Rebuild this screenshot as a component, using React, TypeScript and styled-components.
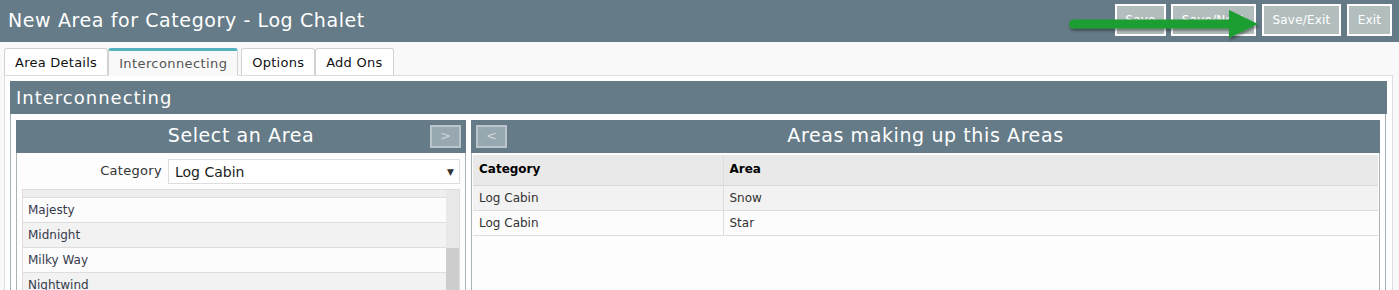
import React from "react";
import styled, { createGlobalStyle } from "styled-components";

const GlobalStyle = createGlobalStyle`
  html, body { margin: 0; padding: 0; }
  body {
    background: #f9f9f9;
    font-family: "DejaVu Sans", Verdana, sans-serif;
    overflow: hidden;
    width: 1399px;
    height: 290px;
  }
  * { box-sizing: border-box; }
`;

const slate = "#657b87";

const Page = styled.div`
  position: relative;
  width: 1399px;
  height: 290px;
  overflow: hidden;
`;

const TopBar = styled.header`
  height: 42px;
  background: ${slate};
  display: flex;
  align-items: center;
  justify-content: space-between;
  padding: 0 7px 0 8px;
`;

const Title = styled.h1`
  margin: 0 0 2px;
  font-weight: normal;
  font-size: 19px;
  letter-spacing: 0.6px;
  color: #fff;
`;

const ButtonGroup = styled.div`
  display: flex;
  gap: 6px;
  align-items: center;
  margin-top: -2px;
`;

const ActionButton = styled.button<{ $w: number }>`
  width: ${(p) => p.$w}px;
  height: 32px;
  background: #b2bebd;
  border: 2px solid #fff;
  color: #fff;
  font-family: "DejaVu Sans", Verdana, sans-serif;
  font-size: 12px;
  letter-spacing: 0.2px;
  padding: 0;
`;

const Arrow = styled.svg`
  position: absolute;
  left: 1064px;
  top: 6px;
  overflow: visible;
`;

const Main = styled.main`
  padding: 6px 6px 0 4px;
`;

const TabRow = styled.nav`
  display: flex;
  align-items: flex-end;
`;

const Tab = styled.div<{ $active?: boolean; $gap?: number }>`
  height: 28px;
  padding: 0 10px;
  margin-right: ${(p) => p.$gap ?? 0}px;
  margin-bottom: -1px;
  display: flex;
  align-items: center;
  font-size: 13px;
  letter-spacing: ${(p) => (p.$active ? "0.4px" : "0.25px")};
  border: 1px solid #d2d2d2;
  border-bottom: ${(p) => (p.$active ? "1px solid #f9f9f9" : "1px solid #ddd")};
  border-top: ${(p) => (p.$active ? "3px solid #55b3bd" : "1px solid #d2d2d2")};
  border-radius: 3px 3px 0 0;
  background: ${(p) => (p.$active ? "#f9f9f9" : "#fff")};
  color: ${(p) => (p.$active ? "#555" : "#111")};
  padding-top: ${(p) => (p.$active ? "1px" : "0")};
  position: relative;
  z-index: ${(p) => (p.$active ? 2 : 1)};
`;

const TabPanel = styled.section`
  border: 1px solid #ddd;
  background: #fff;
  padding: 5px;
  height: 240px;
`;

const SectionHeader = styled.div`
  height: 33px;
  background: ${slate};
  color: #fff;
  font-size: 18px;
  letter-spacing: 1px;
  display: flex;
  align-items: center;
  padding: 0 0 1px 6px;
`;

const SectionBody = styled.div`
  border: 1px solid #9fb0b8;
  border-top: none;
  padding: 6px 5px 0 5px;
  margin-right: 1px;
  display: flex;
  gap: 5px;
  height: 200px;
`;

const Panel = styled.div<{ $w?: number }>`
  ${(p) => (p.$w ? `width: ${p.$w}px; flex: none;` : "flex: 1;")}
  display: flex;
  flex-direction: column;
`;

const PanelHeader = styled.div`
  height: 33px;
  background: ${slate};
  display: grid;
  grid-template-columns: 1fr auto 1fr;
  align-items: center;
  padding: 0 5px;
`;

const PanelTitle = styled.div`
  grid-column: 2;
  color: #fff;
  font-size: 19px;
  letter-spacing: 0.6px;
  padding-bottom: 3px;
`;

const MoveButton = styled.div<{ $side: "left" | "right" }>`
  grid-column: ${(p) => (p.$side === "left" ? 1 : 3)};
  justify-self: ${(p) => (p.$side === "left" ? "start" : "end")};
  width: 31px;
  height: 23px;
  background: #97a8b0;
  border: 2px solid #b9c5ca;
  color: #d0d8dc;
  font-size: 13px;
  display: flex;
  align-items: center;
  justify-content: center;
  padding-bottom: 2px;
`;

const PanelBody = styled.div<{ $pad?: string }>`
  flex: 1;
  border: 1px solid #a9b3b8;
  border-top: none;
  padding: ${(p) => p.$pad ?? "0"};
  background: #fdfdfd;
`;

const FieldRow = styled.div`
  display: flex;
  align-items: center;
  gap: 6px;
  margin-bottom: 5px;
`;

const FieldLabel = styled.label`
  width: 140px;
  text-align: right;
  font-size: 13px;
  letter-spacing: 0.3px;
  color: #333;
  padding-bottom: 3px;
`;

const Select = styled.div`
  flex: 1;
  height: 25px;
  border: 1px solid #ddd;
  background: #fff;
  display: flex;
  align-items: center;
  justify-content: space-between;
  padding: 0 5px 0 6px;
  font-size: 14px;
  color: #222;
`;

const Caret = styled.span`
  font-size: 9px;
  color: #333;
`;

const ListBox = styled.div`
  border: 1px solid #ddd;
  display: flex;
  height: 110px;
`;

const ListRows = styled.div`
  flex: 1;
  display: flex;
  flex-direction: column;
`;

const ListHead = styled.div`
  height: 8px;
  background: #eee;
  border-bottom: 1px solid #ddd;
  flex: none;
`;

const ListRow = styled.div<{ $alt: boolean }>`
  height: 25px;
  flex: none;
  border-bottom: 1px solid #ddd;
  background: ${(p) => (p.$alt ? "#f2f2f2" : "#fcfcfc")};
  font-size: 12px;
  color: #363a4c;
  display: flex;
  align-items: center;
  padding: 0 5px;
`;

const ScrollTrack = styled.div`
  width: 13px;
  background: #e8e8e8;
  display: flex;
  flex-direction: column;
`;

const ScrollThumb = styled.div`
  margin-top: 58px;
  flex: 1;
  background: #cdcdcd;
`;

const Table = styled.table`
  width: calc(100% - 2px);
  margin: 2px 1px 0;
  border-collapse: collapse;
  font-size: 12px;
  color: #333;
`;

const Th = styled.th<{ $w?: number }>`
  ${(p) => (p.$w ? `width: ${p.$w}px;` : "")}
  height: 30px;
  background: #e9e9e9;
  border-bottom: 1px solid #d8d8d8;
  border-right: 1px solid #ddd;
  text-align: left;
  padding: 0 6px 1px;
  color: #000;
  font-weight: bold;
  &:last-child { border-right: none; }
`;

const Tr = styled.tr<{ $alt: boolean }>`
  background: ${(p) => (p.$alt ? "#f2f2f2" : "#fcfcfc")};
`;

const Td = styled.td`
  height: 25px;
  border-bottom: 1px solid #ddd;
  border-right: 1px solid #ddd;
  padding: 0 6px 0;
  &:last-child { border-right: none; }
`;

const areas = ["Majesty", "Midnight", "Milky Way", "Nightwind", "Ocean"];
const links = [
  { category: "Log Cabin", area: "Snow" },
  { category: "Log Cabin", area: "Star" },
];

export default function App() {
  return (
    <Page>
      <GlobalStyle />
      <TopBar>
        <Title>New Area for Category - Log Chalet</Title>
        <ButtonGroup>
          <ActionButton $w={51} style={{ marginRight: -1 }}>Save</ActionButton>
          <ActionButton $w={85}>Save/Next</ActionButton>
          <ActionButton $w={79}>Save/Exit</ActionButton>
          <ActionButton $w={45}>Exit</ActionButton>
        </ButtonGroup>
      </TopBar>
      <Arrow width="200" height="40" viewBox="0 0 200 40">
        <defs>
          <filter id="sh" x="-10%" y="-30%" width="120%" height="180%">
            <feDropShadow dx="1" dy="2" stdDeviation="1.5" floodColor="#000" floodOpacity="0.45" />
          </filter>
        </defs>
        <g filter="url(#sh)" fill="#1f9e33">
          <rect x="5" y="13.5" width="163" height="9" rx="4.5" />
          <polygon points="165,4 194,18 165,32" />
        </g>
      </Arrow>
      <Main>
        <TabRow>
          <Tab>Area Details</Tab>
          <Tab $active $gap={3}>Interconnecting</Tab>
          <Tab>Options</Tab>
          <Tab>Add Ons</Tab>
        </TabRow>
        <TabPanel>
          <SectionHeader>Interconnecting</SectionHeader>
          <SectionBody>
            <Panel $w={450}>
              <PanelHeader>
                <PanelTitle>Select an Area</PanelTitle>
                <MoveButton $side="right">&gt;</MoveButton>
              </PanelHeader>
              <PanelBody $pad="6px 5px 5px">
                <FieldRow>
                  <FieldLabel>Category</FieldLabel>
                  <Select>
                    <span>Log Cabin</span>
                    <Caret>▼</Caret>
                  </Select>
                </FieldRow>
                <ListBox>
                  <ListRows>
                    <ListHead />
                    {areas.map((a, i) => (
                      <ListRow key={a} $alt={i % 2 === 1}>{a}</ListRow>
                    ))}
                  </ListRows>
                  <ScrollTrack>
                    <ScrollThumb />
                  </ScrollTrack>
                </ListBox>
              </PanelBody>
            </Panel>
            <Panel>
              <PanelHeader>
                <MoveButton $side="left">&lt;</MoveButton>
                <PanelTitle>Areas making up this Areas</PanelTitle>
              </PanelHeader>
              <PanelBody>
                <Table>
                  <thead>
                    <tr>
                      <Th $w={250}>Category</Th>
                      <Th>Area</Th>
                    </tr>
                  </thead>
                  <tbody>
                    {links.map((l, i) => (
                      <Tr key={l.area} $alt={i % 2 === 0}>
                        <Td>{l.category}</Td>
                        <Td>{l.area}</Td>
                      </Tr>
                    ))}
                  </tbody>
                </Table>
              </PanelBody>
            </Panel>
          </SectionBody>
        </TabPanel>
      </Main>
    </Page>
  );
}
